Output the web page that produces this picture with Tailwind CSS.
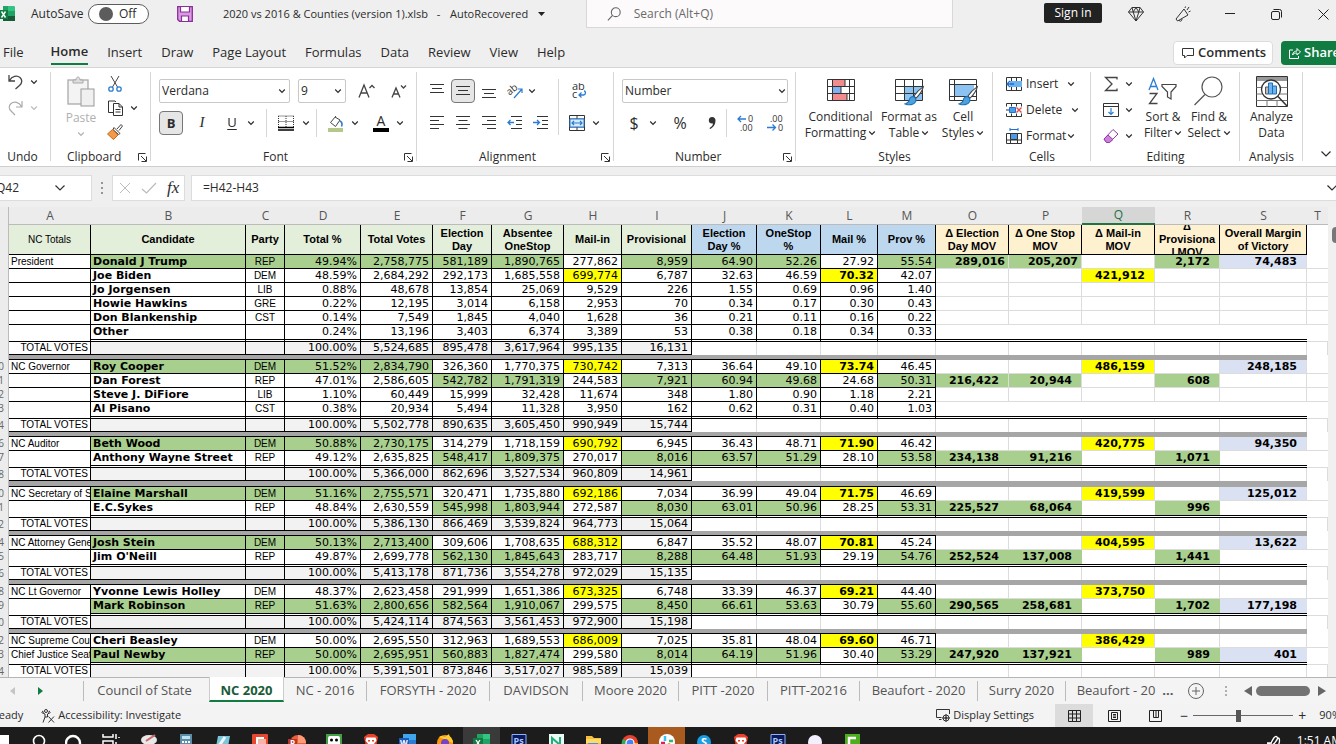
<!DOCTYPE html>
<html lang="en">
<head>
<meta charset="utf-8">
<title>2020 vs 2016 &amp; Counties (version 1).xlsb - Excel</title>
<script src="https://cdn.jsdelivr.net/npm/@tailwindcss/browser@4"></script>
</head>
<body class="flex h-screen flex-col overflow-hidden bg-[#efefef] font-['Open_Sans',sans-serif] text-xs text-[#2b2b2b]">
<svg class="hidden">
  <symbol id="chev" viewBox="0 0 8 8"><path d="M1.2 2.5 4 5.3 6.8 2.5" fill="none" stroke="currentColor" stroke-width="1.2"/></symbol>
  <symbol id="chevlg" viewBox="0 0 12 12"><path d="M1.500 3.500 6 8l4.500-4.500" fill="none" stroke="currentColor" stroke-width="1.2"/></symbol>
  <symbol id="launch" viewBox="0 0 9 9"><path d="M.5 7.5V.5H7.5M3 3l5 5M8.500 3.500v5h-5" fill="none" stroke="#333"/></symbol>
  <symbol id="brush" viewBox="0 0 20 20"><path d="M18.500 1.500c-3 2-7 6-9 9l2 2c3-3 6-7 7-11z" fill="#fff" stroke="#444"/><path d="M9 11c-2 0-3.500 1-4 3.500C4.500 16.500 3 17.500 1 18c4 1.500 8.500 1 10-2 .800-2 0-4-2-5z" fill="#4aa3e0" stroke="#1f6fb0"/></symbol>
</svg>

<!-- Title bar -->
<header class="flex h-7 shrink-0 items-center">
  <div class="flex w-[586px] shrink-0 items-center">
    <svg class="size-4 shrink-0" viewBox="0 0 16 16"><path d="M3 0h10a2 2 0 0 1 2 2v13H3z" fill="#21a366"/><path d="M8 0h5a2 2 0 0 1 2 2v3H8z" fill="#33c481"/><path d="M3 10h12v5H3z" fill="#185c37"/><path d="M-2 4H8v9H-2z" fill="#107c41"/><path d="m1.500 5.500 4 6M5.500 5.500l-4 6" stroke="#fff" stroke-width="1.400"/></svg>
    <label for="autosave" class="ml-[15px] w-[57px]">AutoSave</label>
    <label class="flex h-5 w-[61px] items-center gap-1.5 rounded-full border border-[#5c5c5c] bg-white pl-2.5">
      <input id="autosave" type="checkbox" class="size-3.5 shrink-0 appearance-none rounded-full bg-[#5c5c5c]"><span>Off</span>
    </label>
    <button aria-label="Save" class="ml-7"><svg class="size-4" viewBox="0 0 16 16"><path d="M.7.7h14.600v14.600H2.500L.7 13.500z" fill="#d99be0" stroke="#8a2f9a" stroke-width="1.300"/><path d="M3.500 1v5h9V1M4.500 15v-5h7v5" fill="#fff" stroke="#8a2f9a" stroke-width="1.200"/></svg></button>
    <button class="ml-[30px] flex items-center text-[11px] whitespace-pre"><span class="w-[227px] text-left">2020 vs 2016 &amp; Counties (version 1).xlsb&nbsp; &nbsp;-</span><span>AutoRecovered</span><svg class="ml-2.5 h-1 w-[7px]" viewBox="0 0 7 4"><path d="M0 0h7L3.500 4z" fill="#222"/></svg></button>
  </div>
  <div class="flex h-7 w-[367px] items-center border border-t-0 border-[#d8d8d8] bg-[#fcfafb] pl-5">
    <svg class="size-4 text-[#666]" viewBox="0 0 16 16" fill="none" stroke="currentColor" stroke-width="1.200"><circle cx="9.500" cy="6" r="4.800"/><path d="M6 9.500 1 15"/></svg>
    <input type="search" aria-label="Search" placeholder="Search (Alt+Q)" class="ml-3 w-full bg-transparent outline-none placeholder:text-[#6a6a6a]">
  </div>
  <div class="-mr-[11px] ml-auto flex shrink-0 items-center">
    <button class="mr-2.5 mb-0.5 h-5 w-[58px] rounded-xs bg-[#222] text-white">Sign in</button>
    <button aria-label="Premium" class="flex w-[47px] justify-center"><svg class="size-4" viewBox="0 0 16 16" fill="none" stroke="#333" stroke-linejoin="round"><path d="M4 1.500h8L15.500 6 8 15 .5 6zM.5 6h15M4 1.500 5.200 6 8 15l2.800-9L12 1.500M5.200 6 8 1.500 10.800 6"/></svg></button>
    <button aria-label="What's new" class="flex w-[47px] justify-center"><svg class="size-4" viewBox="0 0 16 16" fill="none" stroke="#333" stroke-linejoin="round"><path d="M9 3 1 13l1.500 2L13 9zM4 14c.5 2 3 1.500 3-1M12 4l2-3M13.500 6l2-1M10 2l.500-1.500"/></svg></button>
    <button aria-label="Minimize" class="flex w-[47px] justify-center"><svg class="h-3 w-2.5" viewBox="0 0 10 12"><path d="M0 5.500h10" stroke="#222"/></svg></button>
    <button aria-label="Restore" class="flex w-[47px] justify-center"><svg class="size-[11px]" viewBox="0 0 11 11" fill="none" stroke="#222"><rect x=".5" y="2.500" width="8" height="8" rx="1.500"/><path d="M2.500.5H8.500a2 2 0 0 1 2 2v6"/></svg></button>
    <button aria-label="Close" class="flex w-[47px] justify-center"><svg class="size-[11px]" viewBox="0 0 11 11"><path d="m.5.5 10 10M10.500.5l-10 10" stroke="#222"/></svg></button>
  </div>
</header>

<!-- Ribbon tabs -->
<nav class="flex h-10 shrink-0 items-center gap-[19px] border-b border-[#d5d5d5] pt-2.5 pl-[3px] text-[13px]">
  <button class="mr-2">File</button>
  <button class="h-6 border-b-2 border-[#107c41] font-semibold">Home</button>
  <button>Insert</button><button>Draw</button><button>Page Layout</button><button>Formulas</button><button>Data</button><button>Review</button><button>View</button><button>Help</button>
  <div class="-mr-2 ml-auto flex gap-2 font-semibold">
    <button class="flex h-6 w-[100px] items-center gap-1 rounded border border-[#dcdcdc] bg-white pl-2"><svg class="size-3 shrink-0" viewBox="0 0 12 12"><path d="M.5 1.500h11v7H5L2.500 11V8.500h-2z" fill="none" stroke="#333"/></svg>Comments</button>
    <button class="flex h-6 w-[63px] items-center gap-[3px] rounded bg-[#107c41] pl-2 text-white"><svg class="size-3 shrink-0" viewBox="0 0 12 12" fill="none" stroke="#fff"><path d="M4 3H.5v8.500h9V9M3.500 8C4 5 6 4 8 4V1.500l3.500 3.500L8 8V6C6 6 4.500 6.500 3.500 8z"/></svg>Share</button>
  </div>
</nav>

<!-- Ribbon -->
<section class="flex h-[99px] shrink-0 border-b border-[#cfcfcf] bg-white">
  <div class="relative flex w-[51px] shrink-0 flex-col pt-1.5 after:absolute after:top-1 after:right-0 after:h-[89px] after:w-px after:bg-[#d6d6d6]">
    <div class="flex flex-col gap-2.5 pl-2">
      <button aria-label="Undo" class="flex items-center gap-1.5"><svg class="size-4" viewBox="0 0 16 16" fill="none" stroke="#444" stroke-width="1.300"><path d="M1 1v6h6M1.500 6.500C4 2 9 1 12 3.500c3 3 2 5.500-.5 8L7.500 15"/></svg><svg class="size-2"><use href="#chev"/></svg></button>
      <button aria-label="Redo" disabled class="flex items-center gap-1.5 text-[#bbb]"><svg class="size-4" viewBox="0 0 16 16" fill="none" stroke="#aaa" stroke-width="1.200"><path d="M14 1v6H8M13.500 6.500C11 2 6 1 3 3.500c-3 3-2 5.500.5 8L7 15"/></svg><svg class="size-2"><use href="#chev"/></svg></button>
    </div>
    <div class="mt-auto h-[17px] pr-1.5 text-center">Undo</div>
  </div>

  <div class="relative flex w-[100px] shrink-0 flex-col pt-2 after:absolute after:top-1 after:right-0 after:h-[89px] after:w-px after:bg-[#d6d6d6]">
    <div class="flex pl-3.5">
      <button disabled class="flex w-8 flex-col items-center text-[#b0b0b0]"><svg class="mb-0.5 h-8 w-[30px]" viewBox="0 0 30 32"><rect x="2" y="4" width="20" height="24" fill="#f4f4f4" stroke="#aaa" stroke-width="1.300"/><path d="M7 7V4h3c0-4 4-4 4 0h3v3z" fill="#ddd" stroke="#aaa"/><rect x="15" y="13" width="13" height="17" fill="#f0f0f0" stroke="#999"/></svg>Paste<svg class="mt-1 size-2"><use href="#chev"/></svg></button>
      <div class="flex flex-col gap-2 pl-2.5">
        <button aria-label="Cut"><svg class="size-4" viewBox="0 0 16 16" fill="none"><path d="m4 0 6.500 11M12 0 5.500 11" stroke="#444"/><circle cx="4" cy="13" r="2.200" stroke="#2b7cd3" stroke-width="1.300"/><circle cx="12" cy="13" r="2.200" stroke="#2b7cd3" stroke-width="1.300"/></svg></button>
        <button aria-label="Copy" class="flex items-center gap-1.5"><svg class="h-4 w-[17px]" viewBox="0 0 17 16" stroke="#333" fill="#fff"><path d="M6 12.500H1.500V1H8l1 1M6.500 3.500H12L15.500 7v8.500h-9zM12 3.500V7h3.500M8.500 9.500h5M8.500 12h5"/></svg><svg class="size-2"><use href="#chev"/></svg></button>
        <button aria-label="Format painter"><svg class="size-4" viewBox="0 0 16 16"><path d="m10 5 4-4.500L15.500 2 12 6.500" fill="#fff" stroke="#444"/><path d="M7 3.500 13 9.500l-1.500 1-5.500-5z" fill="#fff" stroke="#444"/><path d="M5.500 5.500 .5 10l6 5.500L11 11z" fill="#f2994a" stroke="#c76a15"/></svg></button>
      </div>
    </div>
    <div class="mt-auto flex h-[17px] items-start pl-4"><span class="w-[59px]">Clipboard</span><button aria-label="Clipboard settings" class="mt-1 ml-3"><svg class="size-[9px]"><use href="#launch"/></svg></button></div>
  </div>

  <div class="relative flex w-[266px] shrink-0 flex-col pt-[11px] pl-2 after:absolute after:top-1 after:right-0 after:h-[89px] after:w-px after:bg-[#d6d6d6]">
    <div class="flex h-6 items-center gap-2">
      <div class="relative flex items-center"><select aria-label="Font name" class="h-6 w-[131px] appearance-none rounded-xs border border-[#c8c8c8] pl-0.5"><option>Verdana</option></select><svg class="pointer-events-none absolute right-1 size-2"><use href="#chev"/></svg></div>
      <div class="relative flex items-center"><select aria-label="Font size" class="h-6 w-12 appearance-none rounded-xs border border-[#c8c8c8] pl-0.5"><option>9</option></select><svg class="pointer-events-none absolute right-1 size-2"><use href="#chev"/></svg></div>
      <button aria-label="Grow font" class="flex w-6 justify-center"><svg class="h-4 w-[17px]" viewBox="0 0 17 16" fill="none" stroke="#444" stroke-width="1.300"><path d="M1 14.500 6 2l5 12.500M3 10h6M11.500 5 14 2.500 16.500 5"/></svg></button>
      <button aria-label="Shrink font" class="flex w-6 justify-center"><svg class="h-4 w-[17px]" viewBox="0 0 17 16" fill="none" stroke="#444" stroke-width="1.300"><path d="M2 14.500 6 5l4 9.500M3.500 11h5M11 2.500 13.500 5 16 2.500"/></svg></button>
    </div>
    <div class="mt-2 flex h-6 items-center">
      <button class="size-6 rounded border border-[#777] bg-[#e6e6e6] text-[13px] leading-5 font-bold">B</button>
      <button class="ml-[7px] w-6 font-['Liberation_Serif',serif] text-[15px] italic">I</button>
      <button class="ml-1.5 w-6 text-[13px] underline underline-offset-2">U</button>
      <button aria-label="Underline options" class="w-3.5"><svg class="mx-auto size-2"><use href="#chev"/></svg></button>
      <span class="ml-2 h-7 w-px bg-[#d6d6d6]"></span>
      <button aria-label="Borders" class="ml-[7px] w-6"><svg class="mx-auto size-4" viewBox="0 0 16 16"><path d="M.5 1H16M.5 6.500H16M.5 1v11M8 1v11M15.500 1v11" stroke="#333" stroke-dasharray="1 1" fill="none"/><path d="M0 12.500h16M0 15h16" stroke="#000" stroke-width="1.500"/></svg></button>
      <button aria-label="Border options" class="w-4"><svg class="mx-auto size-2"><use href="#chev"/></svg></button>
      <span class="ml-0.5 h-7 w-px bg-[#d6d6d6]"></span>
      <button aria-label="Fill color" class="ml-1.5 w-6"><svg class="mx-auto size-[17px]" viewBox="0 0 17 17"><path d="M9 1 3.500 7.500l5 4L13 5 8 2" fill="#fff" stroke="#444"/><path d="M13 6c2 1 2.500 3 1.500 5.500" stroke="#2b7cd3" stroke-width="1.600" fill="none"/><path d="M1 13h15v4H1z" fill="#b5c78a"/></svg></button>
      <button aria-label="Fill options" class="w-4"><svg class="mx-auto size-2"><use href="#chev"/></svg></button>
      <button aria-label="Font color" class="ml-1.5 flex h-[18px] w-6 flex-col items-center text-sm leading-[14px]"><span>A</span><span class="h-1 w-4 shrink-0 bg-black"></span></button>
      <button aria-label="Font color options" class="w-3.5"><svg class="mx-auto size-2"><use href="#chev"/></svg></button>
    </div>
    <div class="mt-auto flex h-[17px] items-start pl-[104px]"><span class="w-6">Font</span><button aria-label="Font settings" class="mt-1 ml-[117px]"><svg class="size-[9px]"><use href="#launch"/></svg></button></div>
  </div>

  <div class="relative flex w-[197px] shrink-0 flex-col pt-[11px] pl-2 after:absolute after:top-1 after:right-0 after:h-[89px] after:w-px after:bg-[#d6d6d6]">
    <div class="flex">
      <div class="flex w-[134px] flex-col gap-2 border-r border-[#d6d6d6]">
        <div class="flex h-6 items-center gap-0.5">
          <button aria-label="Top align" class="w-6"><svg class="mx-auto size-4" viewBox="0 0 16 16" stroke="#333"><path d="M1 1.500h14M3 5.500h10M1 9.500h14"/></svg></button>
          <button aria-label="Middle align" class="size-6 rounded border border-[#777] bg-[#e6e6e6]"><svg class="mx-auto size-4" viewBox="0 0 16 16" stroke="#333"><path d="M1 3.500h14M3 7.500h10M1 11.500h14"/></svg></button>
          <button aria-label="Bottom align" class="w-6"><svg class="mx-auto size-4" viewBox="0 0 16 16" stroke="#333"><path d="M1 6.500h14M3 10.500h10M1 14.500h14"/></svg></button>
          <button aria-label="Orientation" class="flex w-9 items-center gap-1 pl-1"><svg class="h-4 w-[17px] shrink-0" viewBox="0 0 17 16"><text x="0" y="10" transform="rotate(-40 5 8)" font-size="10" fill="#333">ab</text><path d="m7 15 8-9M11 6h4v4" fill="none" stroke="#2b7cd3" stroke-width="1.200"/></svg><svg class="size-2 shrink-0"><use href="#chev"/></svg></button>
        </div>
        <div class="flex h-6 items-center gap-0.5">
          <button aria-label="Align left" class="w-6"><svg class="mx-auto size-4" viewBox="0 0 16 16" stroke="#333"><path d="M1 1.500h14M1 5.500h9M1 9.500h14M1 13.500h9"/></svg></button>
          <button aria-label="Center" class="w-6"><svg class="mx-auto size-4" viewBox="0 0 16 16" stroke="#333"><path d="M1 1.500h14M3.500 5.500h9M1 9.500h14M3.500 13.500h9"/></svg></button>
          <button aria-label="Align right" class="w-6"><svg class="mx-auto size-4" viewBox="0 0 16 16" stroke="#333"><path d="M1 1.500h14M6 5.500h9M1 9.500h14M6 13.500h9"/></svg></button>
          <button aria-label="Decrease indent" class="w-6"><svg class="mx-auto size-4" viewBox="0 0 16 16" stroke="#333" fill="none"><path d="M4 1.500h11M9 5.500h6M9 9.500h6M4 13.500h11"/><path d="M7 7.500H1M3.500 5 1 7.500 3.500 10" stroke="#2b7cd3" stroke-width="1.300"/></svg></button>
          <button aria-label="Increase indent" class="w-6"><svg class="mx-auto size-4" viewBox="0 0 16 16" stroke="#333" fill="none"><path d="M4 1.500h11M9 5.500h6M9 9.500h6M4 13.500h11"/><path d="M0 7.500h6.500M4 5l2.500 2.500L4 10" stroke="#2b7cd3" stroke-width="1.300"/></svg></button>
        </div>
      </div>
      <div class="flex flex-col gap-2 pl-2">
        <button aria-label="Wrap text" class="h-6 w-6"><svg class="mx-auto size-4" viewBox="0 0 16 16"><text x="1" y="7" font-size="11" fill="#333">ab</text><text x="1" y="15" font-size="11" fill="#333">c</text><path d="M13 8c2 0 2 4-.5 4H8M10.500 9.500 8 12l2.500 2.500" fill="none" stroke="#2b7cd3" stroke-width="1.300"/></svg></button>
        <div class="flex h-6 items-center">
          <button aria-label="Merge and center" class="w-5"><svg class="mx-auto size-4" viewBox="0 0 16 16" fill="none"><path d="M.5.5h15v15H.5zM.5 4h15M.5 12h15M8 .5V4M8 12v3.500" stroke="#333"/><path d="M1 4h14v8H1z" fill="#d5eafb" stroke="#2b7cd3"/><path d="M3 8h10M5 6 3 8l2 2M11 6l2 2-2 2" stroke="#2b7cd3" stroke-width="1.200"/></svg></button>
          <button aria-label="Merge options" class="w-4.5"><svg class="mx-auto size-2"><use href="#chev"/></svg></button>
        </div>
      </div>
    </div>
    <div class="mt-auto flex h-[17px] items-start pl-[54px]"><span class="w-[54px]">Alignment</span><button aria-label="Alignment settings" class="mt-1 ml-[68px]"><svg class="size-[9px]"><use href="#launch"/></svg></button></div>
  </div>

  <div class="relative flex w-[182px] shrink-0 flex-col pt-[11px] pl-2 after:absolute after:top-1 after:right-0 after:h-[89px] after:w-px after:bg-[#d6d6d6]">
    <div class="relative flex w-[166px] items-center"><select aria-label="Number format" class="h-6 w-full appearance-none rounded-xs border border-[#c8c8c8] pl-0.5"><option>Number</option></select><svg class="pointer-events-none absolute right-0.5 size-2"><use href="#chev"/></svg></div>
    <div class="mt-2 flex h-6 items-center">
      <button aria-label="Accounting format" class="w-6 text-base">$</button>
      <button aria-label="Accounting options" class="w-3.5"><svg class="mx-auto size-2"><use href="#chev"/></svg></button>
      <button aria-label="Percent style" class="ml-2 w-6 text-base">%</button>
      <button aria-label="Comma style" class="ml-2 w-6"><svg class="mx-auto h-4 w-2.5" viewBox="0 0 10 16"><path d="M5 2a3.200 3.200 0 0 1 3.500 3.500C8.500 10 6 12.500 3 14l-.5-1C4.500 12 6 10 6 8.500 3.500 9 1.800 7.500 1.800 5.500 1.800 3.500 3 2 5 2z" fill="#333"/></svg></button>
      <span class="ml-0.5 h-7 w-px bg-[#d6d6d6]"></span>
      <button aria-label="Increase decimal" class="ml-1.5 w-6"><svg class="mx-auto h-4 w-[17px]" viewBox="0 0 17 16"><text x="11" y="7" font-size="9" fill="#333">0</text><text x="3" y="15.500" font-size="9" fill="#333">.00</text><path d="M9 4H1M4 1 1 4l3 3" stroke="#2b7cd3" stroke-width="1.300" fill="none"/></svg></button>
      <button aria-label="Decrease decimal" class="ml-1.5 w-6"><svg class="mx-auto h-4 w-[17px]" viewBox="0 0 17 16"><text x="3" y="7" font-size="9" fill="#333">.00</text><text x="11" y="15.500" font-size="9" fill="#333">0</text><path d="M0 12.500h8.500M5.500 9.500l3 3-3 3" stroke="#2b7cd3" stroke-width="1.300" fill="none"/></svg></button>
    </div>
    <div class="mt-auto flex h-[17px] items-start pl-[53px]"><span class="w-11">Number</span><button aria-label="Number settings" class="mt-1 ml-16"><svg class="size-[9px]"><use href="#launch"/></svg></button></div>
  </div>

  <div class="relative flex w-[197px] shrink-0 flex-col pt-2 after:absolute after:top-1 after:right-0 after:h-[89px] after:w-px after:bg-[#d6d6d6]">
    <div class="flex leading-4">
      <button class="ml-2 flex w-[73px] flex-col items-center"><svg class="h-[33px] w-8" viewBox="0 0 32 33"><path d="M2.500 3.500h27v21h-27z" fill="#fff"/><path d="M8 4h12v6H8zM8 17h14v7H8z" fill="#f28b8b"/><path d="M8 11h8v6H8z" fill="#7fb2f0"/><path d="M2.500 3.500h27v21h-27zM2.500 10.500h27M2.500 17.500h27M7.500 3.500v21M24.500 3.500v21M20 3.500v7M16 10.500v7M22 17.500v7" fill="none" stroke="#333"/></svg>Conditional<span class="flex items-center gap-0.5">Formatting<svg class="size-2"><use href="#chev"/></svg></span></button>
      <button class="flex w-16 flex-col items-center"><svg class="h-[33px] w-8" viewBox="0 0 32 33"><path d="M2.500 3.500h27v21h-27z" fill="#fff"/><path d="M11 10h18v14H11z" fill="#8cc3f2"/><path d="M2.500 3.500h27v21h-27zM2.500 10.500h27M2.500 17.500h27M11.500 3.500v21M20.500 3.500v21" fill="none" stroke="#333"/><use href="#brush" x="11" y="9" width="21" height="21"/></svg>Format as<span class="flex items-center gap-0.5">Table<svg class="size-2"><use href="#chev"/></svg></span></button>
      <button class="flex w-11 flex-col items-center"><svg class="h-[33px] w-8" viewBox="0 0 32 33"><path d="M2.500 3.500h27v21h-27z" fill="#fff"/><path d="M7 9h20v12H7z" fill="#8cc3f2"/><path d="M2.500 3.500h27v21h-27zM2.500 8.500h27M7.500 3.500v21M2.500 20.500h27" fill="none" stroke="#333"/><use href="#brush" x="11" y="9" width="21" height="21"/></svg>Cell<span class="flex items-center gap-0.5">Styles<svg class="size-2"><use href="#chev"/></svg></span></button>
    </div>
    <div class="mt-auto h-[17px] text-center">Styles</div>
  </div>

  <div class="relative flex w-[98px] shrink-0 flex-col pt-1 after:absolute after:top-1 after:right-0 after:h-[89px] after:w-px after:bg-[#d6d6d6]">
    <div class="flex flex-col gap-0.5 pl-[13px]">
      <button class="flex h-6 items-center"><svg class="mr-1 size-4" viewBox="0 0 16 16"><path d="M.5 1.500h15v13H.5z" fill="#fff" stroke="#333"/><path d="M5.500 1.500v13M10.500 1.500v13" stroke="#333"/><path d="M4 5h12v6H4z" fill="#6db3f2"/><path d="M8 8H1M4 5 1 8l3 3" stroke="#1f6fd0" stroke-width="1.300" fill="none"/></svg><span class="w-[41px] text-left">Insert</span><svg class="size-2"><use href="#chev"/></svg></button>
      <button class="flex h-6 items-center"><svg class="mr-1 size-4" viewBox="0 0 16 16"><path d="M.5 4.500v-3h15v3M.5 11.500v3h15v-3M5.500 1.500v3M10.500 1.500v3M5.500 11.500v3M10.500 11.500v3M0 8h3" fill="none" stroke="#333"/><path d="M3.500 5.500h6v5h-6z" fill="#4a9be8" stroke="#1f6fd0"/><path d="m10.500 5.500 5 5M15.500 5.500l-5 5" stroke="#e04a4a" stroke-width="1.400"/></svg><span class="w-[45px] text-left">Delete</span><svg class="size-2"><use href="#chev"/></svg></button>
      <button class="flex h-6 items-center"><svg class="mr-1 size-4" viewBox="0 0 16 16"><path d="M.5 5.500h15v10H.5zM.5 12h15" fill="#fff" stroke="#333"/><path d="M4 0v3M12 0v3M4 1.500h8" stroke="#1f6fd0" fill="none"/><path d="M4.500 5.500h7v6h-7z" fill="#4a9be8" stroke="#333"/><path d="M4.500 12v3M11.500 12v3" stroke="#333"/></svg><span class="w-[41px] text-left">Format</span><svg class="size-2"><use href="#chev"/></svg></button>
    </div>
    <div class="mt-auto h-[17px] text-center">Cells</div>
  </div>

  <div class="relative flex w-[149px] shrink-0 flex-col pt-1 after:absolute after:top-1 after:right-0 after:h-[89px] after:w-px after:bg-[#d6d6d6]">
    <div class="flex">
      <div class="flex w-[50px] flex-col gap-0.5 pl-3">
        <button aria-label="AutoSum" class="flex h-6 items-center gap-1.5"><svg class="size-4" viewBox="0 0 16 16"><path d="M14 3.500V1.500H2.500L9 8l-6.500 6.500H14v-2" fill="none" stroke="#444" stroke-width="1.300"/></svg><svg class="size-2"><use href="#chev"/></svg></button>
        <button aria-label="Fill" class="flex h-6 items-center gap-1.5"><svg class="size-4" viewBox="0 0 16 16" fill="none"><path d="M.5 1.500h15v13H.5zM.5 4.500h15" stroke="#333"/><path d="M8 6v6.500M5.500 10 8 12.500 10.500 10" stroke="#2b7cd3" stroke-width="1.200"/></svg><svg class="size-2"><use href="#chev"/></svg></button>
        <button aria-label="Clear" class="flex h-6 items-center gap-1.5"><svg class="size-4" viewBox="0 0 16 16"><path d="M10 1.500 15 6l-8.500 8.500h-3L1 11z" fill="#fff" stroke="#8e3fa5"/><path d="m5 7 5 4.500-3.500 3h-3L1 11z" fill="#cf7fdd" stroke="#8e3fa5"/></svg><svg class="size-2"><use href="#chev"/></svg></button>
      </div>
      <button class="flex w-[44px] flex-col items-center pt-1 leading-4"><svg class="h-[33px] w-8 shrink-0" viewBox="0 0 32 33" fill="none"><path d="M2 14 6.500 2.500 11 14M3.500 10.500h6" stroke="#2b7cd3" stroke-width="1.300"/><path d="M2.500 17.500H10L2.500 27.500H10.500" stroke="#444" stroke-width="1.300"/><path d="M15 8.500h14v2L24 16v7l-3.500-2v-5L15 10.500z" stroke="#444" stroke-width="1.200"/></svg><span class="whitespace-nowrap">Sort &amp;</span><span class="flex items-center gap-0.5">Filter<svg class="size-2"><use href="#chev"/></svg></span></button>
      <button class="flex w-12 flex-col items-center pt-1 leading-4"><svg class="h-[33px] w-8 shrink-0" viewBox="0 0 32 33" fill="none" stroke="#555" stroke-width="1.200"><circle cx="19" cy="11" r="10"/><path d="M12 18.500 1.500 29"/></svg><span class="whitespace-nowrap">Find &amp;</span><span class="flex items-center gap-0.5">Select<svg class="size-2"><use href="#chev"/></svg></span></button>
    </div>
    <div class="mt-auto h-[17px] text-center">Editing</div>
  </div>

  <div class="relative flex w-[63px] shrink-0 flex-col pt-1 after:absolute after:top-1 after:right-0 after:h-[89px] after:w-px after:bg-[#d6d6d6]">
    <button class="flex flex-col items-center pt-1 leading-4"><svg class="h-[33px] w-8" viewBox="0 0 32 33"><path d="M.5.5h31v30H.5z" fill="#fff" stroke="#333"/><path d="M1 1h30v4H1z" fill="#999"/><path d="M.5 11.500h31M.5 24.500h31M11 24v7M21 24v7M.5 18h31" stroke="#777"/><circle cx="15" cy="13.500" r="9.500" fill="#fff" stroke="#333" stroke-width="1.300"/><path d="m22 20.500 9 9.500" stroke="#333" stroke-width="1.500"/><path d="M9.500 11h3v7h-3z" fill="#bbb" stroke="#555"/><path d="M12.500 7h4v11h-4zM16.500 10h4v8h-4z" fill="#6db3f2" stroke="#1f6fb0"/></svg>Analyze<span>Data</span></button>
    <div class="mt-auto h-[17px] text-center">Analysis</div>
  </div>
  <button aria-label="Collapse ribbon" class="mt-auto mr-1 mb-1.5 ml-auto"><svg class="size-3"><use href="#chevlg"/></svg></button>
</section>

<!-- Formula bar -->
<section class="mt-2 mb-1.5 flex h-[26px] shrink-0 items-stretch gap-2">
  <div class="flex w-[92px] items-center border border-l-0 border-[#dcdcdc] bg-white"><input aria-label="Name box" value="Q42" class="-ml-1 w-[58px] outline-none"><svg class="size-3 text-[#333]"><use href="#chevlg"/></svg></div>
  <svg class="h-full w-1" viewBox="0 0 4 26" fill="#777"><circle cx="2" cy="8" r="1"/><circle cx="2" cy="13" r="1"/><circle cx="2" cy="18" r="1"/></svg>
  <div class="flex w-[73px] items-center gap-2.5 border border-[#dcdcdc] bg-white pl-1.5">
    <button aria-label="Cancel"><svg class="size-3" viewBox="0 0 12 12"><path d="m1 1 10 10M11 1 1 11" stroke="#bbb"/></svg></button>
    <button aria-label="Enter"><svg class="h-3 w-4" viewBox="0 0 16 12"><path d="m1 7 4.500 4L15 1" fill="none" stroke="#bbb" stroke-width="1.200"/></svg></button>
    <button aria-label="Insert function" class="font-['Liberation_Serif',serif] text-[17px] leading-5 italic">fx</button>
  </div>
  <div class="-ml-0.5 flex flex-1 items-center border border-r-0 border-[#dcdcdc] bg-white"><input aria-label="Formula" value="=H42-H43" class="flex-1 pl-[11px] outline-none"><svg class="-mr-0.5 size-3"><use href="#chevlg"/></svg></div>
</section>

<!-- Worksheet grid -->
<main class="flex min-h-0 flex-1 overflow-hidden">
  <table class="w-full table-fixed border-separate border-spacing-0 self-start bg-white text-black">
    <colgroup>
      <col class="w-[9px]"><col class="w-[82px]"><col class="w-[155px]"><col class="w-[39px]"><col class="w-[76px]"><col class="w-[72px]"><col class="w-[59px]"><col class="w-[72px]"><col class="w-[58px]"><col class="w-[70px]"><col class="w-[65px]"><col class="w-[64px]"><col class="w-[57px]"><col class="w-[58px]"><col class="w-[73px]"><col class="w-[73px]"><col class="w-[73px]"><col class="w-[65px]"><col class="w-[87px]"><col>
    </colgroup>
    <thead id="head"></thead>
    <tbody id="grid"></tbody>
  </table>
  <div class="flex w-2 shrink-0 flex-col items-end bg-[#f0f0f0] pt-5"><span class="h-4 w-1 rounded-l bg-[#777]"></span></div>
</main>

<!-- Sheet tabs -->
<nav class="flex h-[27px] shrink-0 items-center border-t border-[#b5b5b5] bg-[#f4f4f4] text-[13px] text-[#555]">
  <div class="flex h-5 w-[84px] shrink-0 items-center gap-[23px] border-r border-[#bbb] pl-2.5">
    <button aria-label="Previous sheets"><svg class="h-2 w-[5px]" viewBox="0 0 5 8"><path d="M5 0v8L0 4z" fill="#c5c5c5"/></svg></button>
    <button aria-label="Next sheets"><svg class="h-2 w-[5px]" viewBox="0 0 5 8"><path d="M0 0v8l5-4z" fill="#107c41"/></svg></button>
  </div>
  <button class="w-[125px] shrink-0 pr-1">Council of State</button>
  <button class="-mt-px h-[25px] w-[75px] shrink-0 self-start border-x border-b-2 border-x-[#ccc] border-b-[#107c41] bg-white pt-1 font-bold text-[#185c37]">NC 2020</button>
  <button class="h-5 w-[83px] shrink-0 border-r border-[#bbb]">NC - 2016</button>
  <button class="h-5 w-[123px] shrink-0 border-r border-[#bbb]">FORSYTH - 2020</button>
  <button class="h-5 w-[93px] shrink-0 border-r border-[#bbb]">DAVIDSON</button>
  <button class="h-5 w-24 shrink-0 border-r border-[#bbb]">Moore 2020</button>
  <button class="h-5 w-[89px] shrink-0 border-r border-[#bbb]">PITT -2020</button>
  <button class="h-5 w-[92px] shrink-0 border-r border-[#bbb]">PITT-20216</button>
  <button class="h-5 w-[118px] shrink-0 border-r border-[#bbb]">Beaufort - 2020</button>
  <button class="h-5 w-[88px] shrink-0 border-r border-[#bbb]">Surry 2020</button>
  <button class="w-[110px] shrink-0 pl-2 text-center whitespace-nowrap">Beaufort - 20 &nbsp;<b>...</b></button>
  <button aria-label="New sheet" class="ml-3 shrink-0"><svg class="size-4" viewBox="0 0 16 16" fill="none" stroke="#666"><circle cx="8" cy="8" r="7.500"/><path d="M8 4v8M4 8h8"/></svg></button>
  <svg class="ml-5 h-4 w-1 shrink-0" viewBox="0 0 4 16" fill="#999"><circle cx="2" cy="4" r="1"/><circle cx="2" cy="8" r="1"/><circle cx="2" cy="12" r="1"/></svg>
  <div class="mr-2.5 ml-auto flex items-center gap-1">
    <svg class="h-2.5 w-2" viewBox="0 0 8 10"><path d="M8 0v10L0 5z" fill="#666"/></svg>
    <span class="h-2.5 w-[54px] rounded-full bg-[#737373]"></span>
    <svg class="ml-1 h-2.5 w-2" viewBox="0 0 8 10"><path d="M0 0v10l8-5z" fill="#666"/></svg>
  </div>
</nav>

<!-- Status bar -->
<footer class="flex h-[23px] shrink-0 items-center bg-[#f3f3f3] text-[11px]">
  <span class="-ml-2">Ready</span>
  <button class="ml-[18px] flex items-center gap-[3px]"><svg class="size-[14px]" viewBox="0 0 14 14" fill="none" stroke="#333"><circle cx="5" cy="2" r="1.500"/><path d="M.5 3.500 4 5v3l-2 5.500M9.500 3.500 6.500 5v3M4 8h2.500M7.500 7.500l5.500 6M13 7.500l-5.500 6M1 2l2 1.500M9 2 7 3.500"/></svg>Accessibility: Investigate</button>
  <div class="-mr-[5px] ml-auto flex h-full items-center">
    <button class="flex w-[119px] items-center gap-[3px]"><svg class="h-[13px] w-[14px]" viewBox="0 0 14 13" fill="none" stroke="#333"><path d="M13.500 5V.5H.5v8h5M3 10.500h2.500"/><circle cx="10" cy="9" r="3"/><circle cx="10" cy="9" r="1"/><path d="M10 5v8M6 9h8"/></svg>Display Settings</button>
    <button aria-label="Normal view" class="flex h-full w-[38px] items-center justify-center bg-[#dcdcdc]"><svg class="h-3 w-[13px]" viewBox="0 0 13 12" fill="none" stroke="#222"><path d="M.5.5h12v11H.5zM.5 4h12M.5 8h12M4.500.5v11M8.500.5v11"/></svg></button>
    <button aria-label="Page layout view" class="flex w-[42px] justify-center"><svg class="h-3 w-[13px]" viewBox="0 0 13 12" fill="none" stroke="#222"><path d="M.5.5h12v11H.5zM3.500 2.500h6v7h-6zM5 4.500h3M5 6h3M5 7.500h3"/></svg></button>
    <button aria-label="Page break view" class="flex w-10 justify-center"><svg class="h-3 w-[13px]" viewBox="0 0 13 12" fill="none" stroke="#222"><path d="M.5.5h12v11H.5zM4.500.5v7h5v-7M7 .5v7"/></svg></button>
    <button aria-label="Zoom out" class="w-[18px] text-sm">−</button>
    <input type="range" aria-label="Zoom" min="0" max="100" value="45" class="h-3 w-[100px] appearance-none bg-[linear-gradient(#666,#666)] bg-[length:100%_1px] bg-center bg-no-repeat [&::-webkit-slider-thumb]:h-3 [&::-webkit-slider-thumb]:w-[5px] [&::-webkit-slider-thumb]:appearance-none [&::-webkit-slider-thumb]:bg-[#555]">
    <button aria-label="Zoom in" class="w-[18px] text-sm">+</button>
    <button class="ml-2">90%</button>
  </div>
</footer>

<!-- Windows taskbar -->
<div class="flex h-[17px] shrink-0 overflow-hidden bg-[#1c1c1c]">
  <button aria-label="Start" class="flex w-[19px] shrink-0 items-start pt-2"><svg class="h-[9px] w-[9px]" viewBox="0 0 9 9"><path d="M0 0h9v9H0z" fill="#fff"/></svg></button>
  <div id="dock" class="flex"></div>
  <div class="-mr-1.5 ml-auto flex items-start text-xs leading-5 text-white">
    <svg class="mt-2 mr-4 size-4" viewBox="0 0 16 16" fill="none" stroke="#fff" stroke-width="1.300"><path d="M2 8h5M1 10l5-2c2-4 4-8 6-6s-3 7-5 8M9 9l4-6c2 0 2 4 0 8"/></svg>
    <span class="mt-1 whitespace-nowrap">1:51 AM</span>
  </div>
</div>

<script>
const letters = 'ABCDEFGHIJKLMOPQRST'.split('');
const titles = ['NC Totals','Candidate','Party','Total %','Total Votes','Election<br>Day','Absentee<br>OneStop','Mail-in','Provisional','Election<br>Day %','OneStop<br>%','Mail %','Prov %','Δ Election<br>Day MOV','Δ One Stop<br>MOV','Δ Mail-in<br>MOV','Δ<br>Provisiona<br>l MOV','Overall Margin<br>of Victory',''];
const GREEN = 'bg-[#a9cf8f]', YELLOW = 'bg-[#ffff00]', LAV = 'bg-[#d9e1f2]';

// Candidate flags: w = race winner, e = leads election day / one stop, m = leads mail-in.
const races = [
  { c: [
    ['we','President','Donald J Trump','REP','49.94%','2,758,775','581,189','1,890,765','277,862','8,959','64.90','52.26','27.92','55.54','289,016','205,207','','2,172','74,483'],
    ['m','','Joe Biden','DEM','48.59%','2,684,292','292,173','1,685,558','699,774','6,787','32.63','46.59','70.32','42.07','','','421,912','',''],
    ['','','Jo Jorgensen','LIB','0.88%','48,678','13,854','25,069','9,529','226','1.55','0.69','0.96','1.40','','','','',''],
    ['','','Howie Hawkins','GRE','0.22%','12,195','3,014','6,158','2,953','70','0.34','0.17','0.30','0.43','','','','',''],
    ['','','Don Blankenship','CST','0.14%','7,549','1,845','4,040','1,628','36','0.21','0.11','0.16','0.22','','','','',''],
    ['','','Other','','0.24%','13,196','3,403','6,374','3,389','53','0.38','0.18','0.34','0.33','','','','','']],
    t: ['5,524,685','895,478','3,617,964','995,135','16,131'] },
  { c: [
    ['wm','NC Governor','Roy Cooper','DEM','51.52%','2,834,790','326,360','1,770,375','730,742','7,313','36.64','49.10','73.74','46.45','','','486,159','','248,185'],
    ['e','','Dan Forest','REP','47.01%','2,586,605','542,782','1,791,319','244,583','7,921','60.94','49.68','24.68','50.31','216,422','20,944','','608',''],
    ['','','Steve J. DiFiore','LIB','1.10%','60,449','15,999','32,428','11,674','348','1.80','0.90','1.18','2.21','','','','',''],
    ['','','Al Pisano','CST','0.38%','20,934','5,494','11,328','3,950','162','0.62','0.31','0.40','1.03','','','','','']],
    t: ['5,502,778','890,635','3,605,450','990,949','15,744'] },
  { c: [
    ['wm','NC Auditor','Beth Wood','DEM','50.88%','2,730,175','314,279','1,718,159','690,792','6,945','36.43','48.71','71.90','46.42','','','420,775','','94,350'],
    ['e','','Anthony Wayne Street','REP','49.12%','2,635,825','548,417','1,809,375','270,017','8,016','63.57','51.29','28.10','53.58','234,138','91,216','','1,071','']],
    t: ['5,366,000','862,696','3,527,534','960,809','14,961'], tall: true },
  { c: [
    ['wm','NC Secretary of State','Elaine Marshall','DEM','51.16%','2,755,571','320,471','1,735,880','692,186','7,034','36.99','49.04','71.75','46.69','','','419,599','','125,012'],
    ['e','','E.C.Sykes','REP','48.84%','2,630,559','545,998','1,803,944','272,587','8,030','63.01','50.96','28.25','53.31','225,527','68,064','','996','']],
    t: ['5,386,130','866,469','3,539,824','964,773','15,064'] },
  { c: [
    ['wm','NC Attorney General','Josh Stein','DEM','50.13%','2,713,400','309,606','1,708,635','688,312','6,847','35.52','48.07','70.81','45.24','','','404,595','','13,622'],
    ['e','','Jim O\'Neill','REP','49.87%','2,699,778','562,130','1,845,643','283,717','8,288','64.48','51.93','29.19','54.76','252,524','137,008','','1,441','']],
    t: ['5,413,178','871,736','3,554,278','972,029','15,135'] },
  { c: [
    ['m','NC Lt Governor','Yvonne Lewis Holley','DEM','48.37%','2,623,458','291,999','1,651,386','673,325','6,748','33.39','46.37','69.21','44.40','','','373,750','',''],
    ['we','','Mark Robinson','REP','51.63%','2,800,656','582,564','1,910,067','299,575','8,450','66.61','53.63','30.79','55.60','290,565','258,681','','1,702','177,198']],
    t: ['5,424,114','874,563','3,561,453','972,900','15,198'] },
  { c: [
    ['m','NC Supreme Court','Cheri Beasley','DEM','50.00%','2,695,550','312,963','1,689,553','686,009','7,025','35.81','48.04','69.60','46.71','','','386,429','',''],
    ['we','Chief Justice Seat 1','Paul Newby','REP','50.00%','2,695,951','560,883','1,827,474','299,580','8,014','64.19','51.96','30.40','53.29','247,920','137,921','','989','401']],
    t: ['5,391,501','873,846','3,517,027','985,589','15,039'], end: true }
];

const font = i => {
  if (i === 0) return "font-['Liberation_Sans',sans-serif] text-[10px] pl-0.5";
  if (i === 2) return "font-['Liberation_Sans',sans-serif] text-[10px] text-center";
  if (i === 1) return "font-['DejaVu_Sans',sans-serif] text-[11px] font-bold pl-0.5";
  if (i < 13) return "font-['DejaVu_Sans',sans-serif] text-[11px] text-right pr-[3px]";
  return "font-['DejaVu_Sans',sans-serif] text-[11px] font-bold text-right";
};
const cell = (h, cls, text) => `<td class="${h} overflow-hidden p-0 align-top whitespace-nowrap ${cls}">${text}</td>`;
const rowNo = (h, lead, n) => `<th scope="row" class="${h} overflow-hidden border-r border-[#bbb] bg-[#ececec] p-0 align-top font-normal"><span class="flex justify-end pr-1 text-[10px] ${lead} text-[#666]">${n > 9 ? n : ''}</span></th>`;

document.getElementById('head').innerHTML =
  '<tr><th class="h-[18px] border-r border-[#bbb] bg-[#ececec] p-0"></th>' + letters.map(l =>
    `<th scope="col" class="h-[18px] p-0 align-bottom text-xs leading-[16px] font-normal ${l === 'Q' ? 'border-b-2 border-[#217346] bg-[#d6d6d6] text-[#217346]' : 'border-b border-[#bbb] bg-[#ececec] text-[#555]'}">${l}</th>`).join('') + '</tr>' +
  '<tr><th class="border-r border-[#bbb] bg-[#ececec] p-0"></th>' + titles.map((t, i) => {
    const bg = i < 9 ? 'bg-[#e3eedb]' : i < 13 ? 'bg-[#bdd7ee]' : i < 18 ? 'bg-[#fdf1d0]' : '';
    const edge = i < 18 ? 'border-r border-b border-black' : '';
    return `<th class="p-0 ${bg} ${edge}"><div class="flex h-[29px] items-center justify-center overflow-hidden whitespace-nowrap font-['Liberation_Sans',sans-serif] leading-[13px] ${i === 0 ? 'text-[10px] font-normal' : 'text-[11px] font-bold'}"><span>${t}</span></div></th>`;
  }).join('') + '</tr>';

let n = 2, html = '';
for (const race of races) {
  race.c.forEach((c, k) => {
    const last = k === race.c.length - 1, f = c[0], h = last ? 'h-[17px]' : 'h-[14px]';
    html += '<tr>' + rowNo(h, 'leading-[13px]', n);
    c.slice(1).forEach((v, i) => {
      let cls = font(i) + ' leading-[13px] ';
      if (i > 12) cls += n === 2 && i < 15 ? 'pr-[3px] ' : last ? 'pr-[10px] ' : 'pr-[9px] ';
      if (i < 13) cls += 'border-r border-r-black ';
      else if (!last) cls += 'border-r border-r-[#dcdcdc] ';
      if (last && i > 0) cls += 'border-b-3 [border-bottom-style:double] border-b-black bg-clip-padding ';
      else if (i < 13) cls += 'border-b border-b-black ';
      else cls += 'border-b border-b-[#dcdcdc] ';
      if (f.includes('w') && i >= 1 && i <= 4) cls += GREEN;
      if (f.includes('w') && i === 17) cls += LAV;
      if (f.includes('e') && [5,6,8,9,10,12,13,14,16].includes(i)) cls += GREEN;
      if (f.includes('m') && [7,11,15].includes(i)) cls += YELLOW;
      if (f.includes('m') && i === 11) cls += ' font-bold';
      html += cell(h, cls, v);
    });
    html += cell(h, 'border-b border-b-[#dcdcdc]', '') + '</tr>';
    n++;
  });
  html += '<tr>' + rowNo('h-[13px]', 'leading-[12px]', n++);
  ['TOTAL VOTES','','','100.00%',...race.t].forEach((v, i) => {
    html += cell('h-[13px]', `${font(i)} leading-[12px] border-r border-b border-black ${i ? 'bg-[#f2f2f2]' : 'pr-0.5 text-right'}`, v);
  });
  for (let i = 9; i < 19; i++) html += cell('h-[13px]', 'border-r border-[#dcdcdc]', '');
  html += '</tr>';
  if (race.end) continue;
  const h = race.tall ? 'h-[6px]' : 'h-[5px]';
  html += `<tr><th class="${h} border-r border-[#bbb] bg-[#ececec] p-0"></th>`;
  n++;
  for (let i = 0; i < 19; i++) html += `<td class="${h} p-0 ${i < 13 ? 'border-b border-black bg-[#a6a6a6]' : i < 18 ? 'bg-[#a6a6a6]' : ''}"></td>`;
  html += '</tr>';
}
document.getElementById('grid').innerHTML = html;

// Pinned taskbar apps, drawn in a 20-unit box.
const apps = [
  ['Search','<circle cx="11" cy="7" r="5.500" fill="none" stroke="#fff" stroke-width="1.600"/><path d="m8 12-3 5" stroke="#fff" stroke-width="1.600"/>'],
  ['Cortana','<circle cx="8" cy="9" r="7" fill="none" stroke="#fff" stroke-width="2.400"/>'],
  ['Task View','<path d="M1 0v3h10V0M1 16V7h10v9M14 0v5M14 8v8M17 3v1" fill="none" stroke="#fff" stroke-width="1.500"/>'],
  ['Snip','<ellipse cx="10" cy="6" rx="8" ry="5" fill="#e8e8e8"/><path d="m7 7 9-6" stroke="#c66" stroke-width="2"/>'],
  ['Calculator','<rect x="4" y="0" width="12" height="18" fill="#5b8fa8"/><path d="M6 2h8v3H6z" fill="#bfe3f2"/><path d="M6 8h2M9 8h2M12 8h2M6 11h2M9 11h2M12 11h2" stroke="#fff" stroke-width="2"/>'],
  ['Notes','<path d="M5 2h12l-3 16H2z" fill="#7cc5d8"/><path d="m6 12 6-9" stroke="#e7f7fb" stroke-width="3"/>'],
  ['Recorder','<rect x="2" y="0" width="16" height="18" rx="1" fill="#e8472f"/><path d="M6 3h8v7H6z" fill="#fff"/><path d="M8 5h8v7H8z" fill="#f6b3a6"/>'],
  ['PowerPoint','<circle cx="11" cy="9" r="8" fill="#e8613a"/><path d="M11 1a8 8 0 0 1 8 8h-8z" fill="#ff9a76"/><path d="M1 5h9v9H1z" fill="#b7352b"/><text x="3" y="12" font-size="8" font-weight="bold" fill="#fff">P</text>'],
  ['Bot','<rect x="2" y="0" width="16" height="18" fill="#43a047"/><rect x="4" y="2" width="12" height="10" rx="2" fill="#fff"/><circle cx="7.500" cy="6" r="1.500"/><circle cx="12.500" cy="6" r="1.500"/>'],
  ['Brave','<path d="M3 3 7 0h6l4 3-2 10-5 5-5-5z" fill="#e9432c"/><path d="M5.500 3.500h9l1 3-3 4h-5l-3-4z" fill="#fff"/><path d="M7 6h2v1.500H7zM11 6h2v1.500h-2z" fill="#e9432c"/>'],
  ['Word','<path d="M5 0h13v18H5z" fill="#41a5ee"/><path d="M5 6h13v12H5z" fill="#2b7cd3"/><path d="M1 4h10v10H1z" fill="#185abd"/><text x="2" y="12" font-size="8" font-weight="bold" fill="#fff">W</text>'],
  ['Firefox','<circle cx="10" cy="9" r="8" fill="#ff9500"/><path d="M4 3c3-2 4 0 6 0l4-3c0 3 4 4 4 9" fill="#ffcc33"/><circle cx="10" cy="9" r="4" fill="#7543c9"/>'],
  ['Excel','<path d="M5 0h13v18H5z" fill="#21a366"/><path d="M11 0h7v5h-7z" fill="#33c481"/><path d="M1 4h10v10H1z" fill="#107c41"/><path d="m4 6 4 6M8 6l-4 6" stroke="#fff" stroke-width="1.300"/>','bg-[#3a3a3a]'],
  ['Photoshop','<path d="M3 .5h14v17H3z" fill="#0b1a5a" stroke="#8fb2ff"/><text x="4.500" y="10" font-size="9" font-weight="bold" fill="#a9c6ff">Ps</text>'],
  ['Nimbus','<rect x="3" y="0" width="15" height="18" fill="#e9fbf3"/><path d="M6 13V4l8 7V3" fill="none" stroke="#1fae7c" stroke-width="2"/>'],
  ['File Explorer','<path d="M3 2h6l2 2h7v12H3z" fill="#f4bf3f"/><path d="M5 8h10v8H5z" fill="#4a90d9"/><path d="M3 5h15v4H3z" fill="#ffd866"/>'],
  ['Chrome','<circle cx="10" cy="9" r="8" fill="#e8412f"/><path d="M10 9 3 5a8 8 0 0 0 4 12z" fill="#35a853"/><path d="m10 9-3 8a8 8 0 0 0 11-8z" fill="#fbbc05"/><circle cx="10" cy="9" r="4" fill="#4285f4" stroke="#fff" stroke-width="1.200"/>'],
  ['Slack','<circle cx="10" cy="8" r="8" fill="#fff"/><path d="M8 2v5" stroke="#36c5f0" stroke-width="2.500"/><path d="M12 7h4" stroke="#2eb67d" stroke-width="2.500"/><path d="M12 9v5" stroke="#ecb22e" stroke-width="2.500"/><path d="M4 9h4" stroke="#e01e5a" stroke-width="2.500"/>','bg-[#a95a1f]'],
  ['Skype','<circle cx="10" cy="8" r="7" fill="#1b9de2"/><text x="7" y="12" font-size="11" font-weight="bold" fill="#fff">S</text>'],
  ['Brave Beta','<path d="M3 3 7 0h6l4 3-2 10-5 5-5-5z" fill="#e9432c"/><path d="M5.500 3.500h9l1 3-3 4h-5l-3-4z" fill="#fff"/><path d="M7 6h2v1.500H7zM11 6h2v1.500h-2z" fill="#e9432c"/>'],
  ['Photoshop 2','<path d="M3 .5h14v17H3z" fill="#0b1a5a" stroke="#8fb2ff"/><text x="4.500" y="10" font-size="9" font-weight="bold" fill="#a9c6ff">Ps</text>'],
  ['Browser','<circle cx="10" cy="8" r="7" fill="#f2f0ff"/>'],
  ['Camtasia','<rect x="3" y="0" width="15" height="18" fill="#4caf1e"/><path d="M14 4H7v8" fill="none" stroke="#fff" stroke-width="2.500"/>']
];
document.getElementById('dock').innerHTML = apps.map(([name, art, bg]) =>
  `<button aria-label="${name}" class="flex w-[37px] shrink-0 items-start justify-center pt-[7px] ${bg || ''}"><svg class="size-5 shrink-0" viewBox="0 0 20 20">${art}</svg></button>`).join('');
</script>
</body>
</html>
